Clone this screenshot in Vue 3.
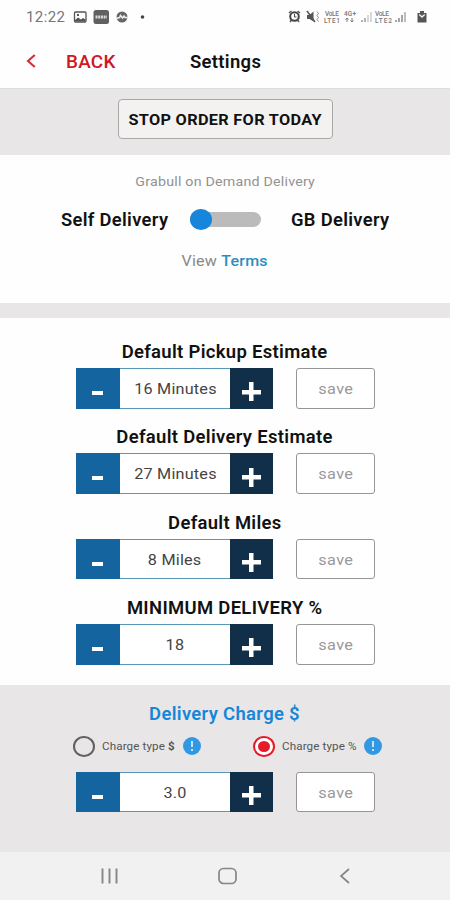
<script setup>
import { ref, reactive } from 'vue'

const settings = reactive([
  { title: 'Default Pickup Estimate', value: 16, unit: ' Minutes' },
  { title: 'Default Delivery Estimate', value: 27, unit: ' Minutes' },
  { title: 'Default Miles', value: 8, unit: ' Miles' },
  { title: 'MINIMUM DELIVERY %', value: 18, unit: '' },
])
const charge = ref(3)
const chargeType = ref('%')
const gbDelivery = ref(false)
</script>

<template>
  <div class="screen">
    <div class="status">
      <span class="clock">12:22</span>
      <svg class="s-left" width="80" height="16" viewBox="0 0 80 16">
        <rect x="1.500" y="3" width="11.500" height="10" rx="1" fill="none" stroke="#555" stroke-width="1.300" />
        <path d="M2 12.500V11l3-2.500 3 2 2-1.500 2.500 1.500v2z" fill="#555" />
        <rect x="4" y="5" width="2" height="2" fill="#555" />
        <rect x="20.500" y="1" width="15.500" height="14" rx="2.500" fill="#606060" />
        <path d="M22.500 8h11.500" stroke="#ddd" stroke-width="3" stroke-dasharray="2 .7" />
        <circle cx="49" cy="8" r="5.500" fill="#666" />
        <path d="M43 9.500l3.500-1 1-2 2 2.500 1.500-2 1 1.500h3" fill="none" stroke="#eee" stroke-width="1.500" />
        <circle cx="69.500" cy="8" r="1.800" fill="#444" />
      </svg>
      <svg class="s-right" width="144" height="18" viewBox="0 0 144 18">
        <path d="M2 5l2.500-2M13 5l-2.500-2M3 14l1.500-2M12 14l-1.500-2" stroke="#555" stroke-width="1.500" />
        <circle cx="7.500" cy="8.500" r="4.300" fill="#fff" stroke="#444" stroke-width="2" />
        <path d="M7.500 6v3h2" fill="none" stroke="#444" />
        <path d="M20 7h2.500l4-3.500v10L22.500 11H20z" fill="#555" />
        <path d="M20 3l8 11" stroke="#555" stroke-width="1.500" />
        <path d="M30 3.500l1.500 2-1.500 2 1.500 2-1.500 2 1.500 2" fill="none" stroke="#888" />
        <g class="tiny">
          <text x="38" y="8" textLength="14">VoLE</text><text x="37" y="15" textLength="16">LTE1</text>
          <text x="57" y="8" textLength="12">4G+</text>
          <text x="88" y="8" textLength="14">VoLE</text><text x="88" y="15" textLength="17">LTE2</text>
        </g>
        <path d="M60 10v4m-1.500-2.500L60 10l1.500 1.500M65 10v4m-1.500-1.500L65 14l1.500-1.500" fill="none" stroke="#777" />
        <path d="M75 14v-2M78 14v-4" stroke="#999" stroke-width="1.500" />
        <path d="M81 14V7M84 14V4" stroke="#ccc" stroke-width="1.500" />
        <path d="M109 14v-2M112 14v-4M115 14V7" stroke="#888" stroke-width="1.500" />
        <path d="M118 14V4" stroke="#aaa" stroke-width="1.500" />
        <path d="M130.500 5h2.500V3h4v2h2.500v9.500h-9z" fill="#555" />
        <path d="M132.300 6.500l2.700 2.500 2.700-2.500" fill="none" stroke="#eee" stroke-width="1.400" />
      </svg>
    </div>

    <header class="header">
      <button class="back">
        <svg width="11" height="16" viewBox="0 0 11 16"><path d="M8.800 2L2 8l6.800 6" fill="none" stroke="#d82c36" stroke-width="2.100" /></svg>
        <span>BACK</span>
      </button>
      <span class="heading">Settings</span>
    </header>

    <div class="band"><button class="stop"><span>STOP ORDER FOR TODAY</span></button></div>

    <section class="demand">
      <div class="caption"><span>Grabull on Demand Delivery</span></div>
      <div class="modes">
        <span class="mode self">Self Delivery</span>
        <button class="switch" :class="{ on: gbDelivery }" @click="gbDelivery = !gbDelivery"><i class="knob"></i></button>
        <span class="mode gb">GB Delivery</span>
      </div>
      <div class="terms"><span>View <a>Terms</a></span></div>
    </section>

    <div class="divider"></div>

    <section class="settings">
      <div v-for="s in settings" :key="s.title" class="setting">
        <h2 class="title"><span>{{ s.title }}</span></h2>
        <div class="controls">
          <div class="stepper">
            <button class="minus" @click="s.value--"><i></i></button>
            <span class="value"><span>{{ s.value }}{{ s.unit }}</span></span>
            <button class="plus" @click="s.value++"><i></i></button>
          </div>
          <button class="save"><span>save</span></button>
        </div>
      </div>
    </section>

    <section class="charge">
      <h2 class="title blue"><span>Delivery Charge $</span></h2>
      <div class="types">
        <div v-for="t in ['$', '%']" :key="t" class="type" @click="chargeType = t">
          <i class="radio" :class="{ checked: chargeType === t }"></i>
          <span class="type-label"><span>Charge type <b :class="{ strong: t === '$' }">{{ t }}</b></span></span>
          <svg class="info" width="18" height="18" viewBox="0 0 18 18">
            <circle cx="9" cy="9" r="9" fill="#3199e4" />
            <path d="M9 4v6" stroke="#c4e3f9" stroke-width="2" />
            <path d="M9 12v2" stroke="#c4e3f9" stroke-width="2" />
          </svg>
        </div>
      </div>
      <div class="controls">
        <div class="stepper">
          <button class="minus" @click="charge--"><i></i></button>
          <span class="value"><span>{{ charge.toFixed(1) }}</span></span>
          <button class="plus" @click="charge++"><i></i></button>
        </div>
        <button class="save"><span>save</span></button>
      </div>
    </section>

    <nav class="nav">
      <svg width="18" height="18" viewBox="0 0 18 18"><path d="M1.500 1.500v15M8.500 1.500v15M15.500 1.500v15" stroke="#858585" stroke-width="1.900" /></svg>
      <svg width="20" height="18" viewBox="0 0 20 18"><rect x="1" y="1.500" width="17" height="15" rx="4.500" fill="none" stroke="#858585" stroke-width="1.700" /></svg>
      <svg width="12" height="18" viewBox="0 0 12 18"><path d="M10 2L2 9l8 7" fill="none" stroke="#858585" stroke-width="1.700" /></svg>
    </nav>
  </div>
</template>

<style>
body { margin: 0; background: #fefefe; }
</style>

<style scoped>
.screen { width: 450px; height: 900px; display: flex; flex-direction: column; overflow: hidden; background: #fefefe; font-family: Roboto, sans-serif; color: #111; white-space: nowrap; }
button { border: 0; padding: 0; background: none; font: inherit; color: inherit; box-sizing: border-box; }
h2 { margin: 0; }
.status { height: 34px; flex: none; display: flex; align-items: center; padding: 0 19px 0 26px; box-sizing: border-box; color: #777; }
.clock { width: 47px; font-size: 15px; letter-spacing: .4px; }
.s-right { margin-left: auto; }
.tiny { font: 500 6.500px Roboto, sans-serif; fill: #777; }
.header { height: 55px; flex: none; display: grid; grid-template-columns: 164px 1fr; align-items: center; padding-left: 26px; box-sizing: border-box; border-bottom: 1px solid #dedede; }
.back { display: flex; align-items: center; gap: 29px; color: #cf1820; font-size: 17.500px; font-weight: 500; letter-spacing: .25px; }
.back span { transform: scaleX(1.08); transform-origin: left; padding-top: 1px; }
.heading { font-size: 17.500px; font-weight: 600; letter-spacing: .3px; transform: scaleX(1.055); transform-origin: left; padding-top: 1px; }
.band { height: 66px; flex: none; background: #e8e6e7; display: flex; justify-content: center; align-items: flex-start; padding-top: 10px; box-sizing: border-box; }
.stop { width: 215px; height: 40px; border: 1.500px solid #a9a8a8; border-radius: 4px; background: #f3f2f1; font-size: 15.500px; font-weight: 700; letter-spacing: .3px; padding-top: 2px; }
.stop span { display: inline-block; transform: scaleX(1.05); }
.demand { height: 148px; flex: none; display: flex; flex-direction: column; }
.caption { padding-top: 17px; height: 19px; line-height: 19px; text-align: center; font-size: 13.500px; letter-spacing: .2px; color: #929292; }
.caption span { display: inline-block; transform: scaleX(1.055); }
.modes { height: 32px; margin-top: 12px; display: grid; grid-template-columns: 129px 101px 1fr; align-items: center; padding-left: 61px; }
.mode { font-size: 17.500px; font-weight: 600; letter-spacing: .3px; transform: scaleX(1.05); transform-origin: left; padding-top: 1px; }
.switch { width: 71px; height: 15px; border-radius: 8px; background: #bbb; display: flex; align-items: center; }
.switch.on { justify-content: flex-end; }
.knob { width: 22px; height: 21px; flex: none; border-radius: 50%; background: #1685dc; }
.terms { margin-top: 15px; height: 22px; line-height: 22px; text-align: center; font-size: 15.500px; letter-spacing: .2px; color: #888; }
.terms span { display: inline-block; transform: scaleX(1.035); }
.terms a { color: #2a8dc1; font-weight: 500; }
.divider { height: 15px; flex: none; background: #e8e6e7; }
.settings { height: 367px; flex: none; padding-top: 17px; box-sizing: border-box; display: flex; flex-direction: column; gap: 13px; }
.title { height: 33px; line-height: 34px; text-align: center; font-size: 17.500px; font-weight: 600; letter-spacing: .3px; }
.title span { display: inline-block; transform: scaleX(1.055); }
.controls { display: flex; gap: 23px; padding-left: 76px; height: 40px; }
.setting { height: 72.400px; }
.setting .controls { height: 40.500px; }
.stepper { width: 197px; display: grid; grid-template-columns: 44px 110px 43px; }
.minus, .plus { display: grid; place-items: center; }
.minus { background: #14649f; }
.plus { background: #122f49; }
.minus i { width: 11px; height: 4px; margin-top: 9px; margin-right: 1px; background: #fff; }
.plus i { width: 19px; height: 19px; margin-top: 7px; margin-right: 1px; background: linear-gradient(#fff, #fff) center / 19px 4.500px no-repeat, linear-gradient(#fff, #fff) center / 4.500px 19px no-repeat; }
.value { display: grid; place-items: center; background: #fff; border-top: 1px solid #5897b8; border-bottom: 1px solid #5897b8; font-size: 15.500px; letter-spacing: .2px; color: #444; }
.value span { transform: scaleX(1.045); padding-top: 1px; }
.save { width: 79px; border: 1px solid #969696; border-radius: 3px; background: #fff; color: #999; font-size: 15.500px; letter-spacing: .4px; padding-top: 1px; }
.save span { display: inline-block; transform: scaleX(1.05); }
.charge { height: 167px; flex: none; background: #e8e6e7; padding-top: 12px; box-sizing: border-box; }
.blue { color: #1687d8; height: 34px; line-height: 34px; }
.types { display: grid; grid-template-columns: 180px 1fr; padding-left: 73px; height: 30px; align-items: center; margin-bottom: 11px; }
.type { display: flex; align-items: center; }
.radio { width: 22px; height: 21px; box-sizing: border-box; border: 2px solid #606060; border-radius: 50%; display: grid; place-items: center; }
.radio.checked { border-color: #e51c27; background: #fff; }
.radio.checked::before { content: ''; width: 12px; height: 11px; border-radius: 50%; background: #e51c27; }
.type-label { width: 80.500px; margin-left: 7px; font-size: 11px; letter-spacing: .1px; color: #555; }
.type-label > span { display: inline-block; transform: scaleX(1.06); transform-origin: left; }
.type + .type .type-label { width: 82px; }
.type-label b { font-weight: 400; }
.type-label b.strong { font-weight: 700; }
.nav { height: 48px; flex: none; background: #f1f1f1; display: grid; grid-template-columns: 117px 121px 1fr; align-items: center; padding-left: 101px; }
</style>
